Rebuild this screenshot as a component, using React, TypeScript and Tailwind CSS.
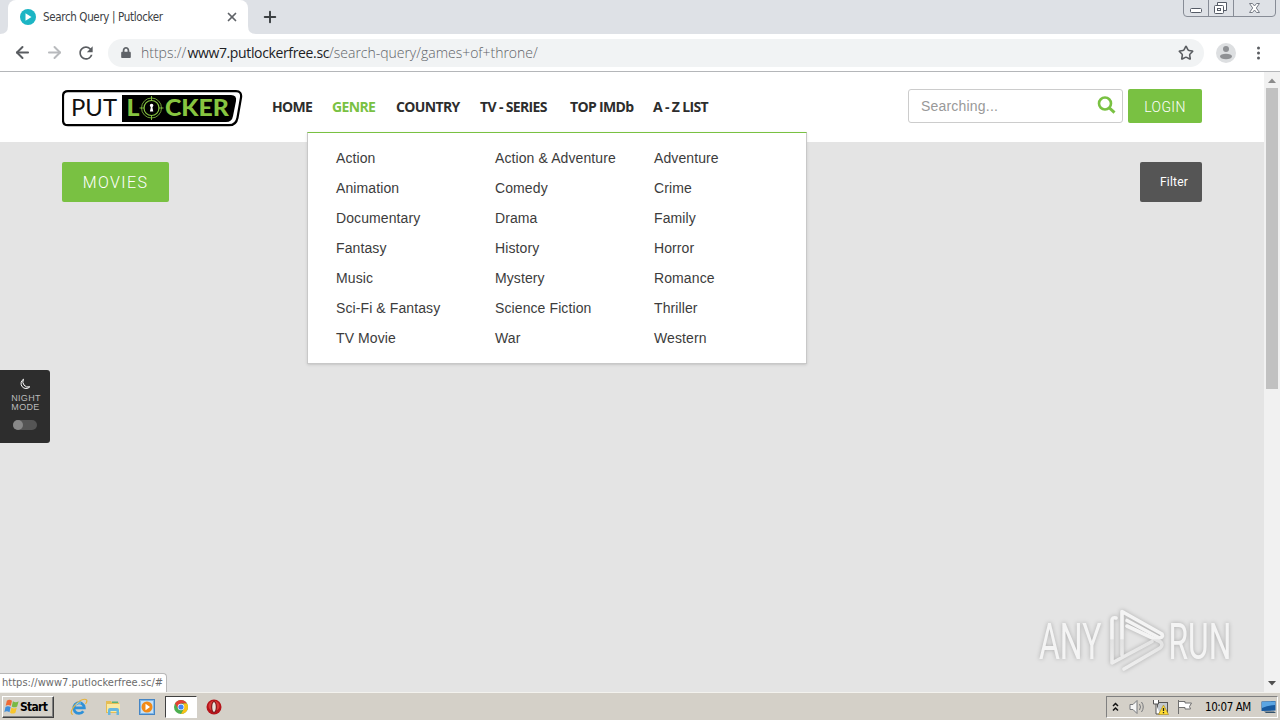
import { ArrowLeft, ArrowRight, Plus, Star, X } from 'lucide-react';
import { FaLock } from 'react-icons/fa';
import { MdRefresh } from 'react-icons/md';

const navItems = [
  { label: 'HOME', className: 'w-[60px]' },
  { label: 'GENRE', className: 'w-16 text-[#79c142]' },
  { label: 'COUNTRY', className: 'w-[84px]' },
  { label: 'TV - SERIES', className: 'w-[90px]' },
  { label: 'TOP IMDb', className: 'w-[83px]' },
  { label: 'A - Z LIST', className: 'w-[60px]' },
];

const genres = [
  'Action', 'Action & Adventure', 'Adventure',
  'Animation', 'Comedy', 'Crime',
  'Documentary', 'Drama', 'Family',
  'Fantasy', 'History', 'Horror',
  'Music', 'Mystery', 'Romance',
  'Sci-Fi & Fantasy', 'Science Fiction', 'Thriller',
  'TV Movie', 'War', 'Western',
];

function WindowControls() {
  return (
    <svg width="94" height="17" viewBox="0 0 94 17" fill="none" className="ml-auto mr-[3px]" aria-hidden>
      <path d="M.5 0v13q0 3.500 3.500 3.500h85q3.500 0 3.500-3.500V0M25.500 0v16M50.500 0v16" stroke="#878c96" />
      <rect x="7.500" y="8.500" width="11" height="4" rx="1" fill="#fff" stroke="#555b66" />
      <path d="M34.500 5V2.500h9v8H41" fill="#fff" stroke="#555b66" />
      <rect x="31.500" y="5.500" width="9" height="8" rx="1" fill="#fff" stroke="#555b66" />
      <rect x="34.500" y="8.500" width="3" height="2" stroke="#555b66" />
      <path d="M66.500 3.500h3l2 2.500 2-2.500h3l-3.200 4.500 3.200 4.500h-3l-2-2.500-2 2.500h-3l3.200-4.500z" fill="#fff" stroke="#777c86" />
    </svg>
  );
}

function TabStrip() {
  return (
    <div className="flex h-[34px] bg-[#dee1e6] pl-2">
      <div className="relative flex h-full w-60 items-center rounded-t-lg bg-white pl-3">
        <svg className="absolute -left-2 bottom-0" width="8" height="8" aria-hidden>
          <path d="M8 0v8H0q8 0 8-8" fill="#fff" />
        </svg>
        <svg className="absolute -right-2 bottom-0" width="8" height="8" aria-hidden>
          <path d="M0 0v8h8q-8 0-8-8" fill="#fff" />
        </svg>
        <svg width="16" height="16" viewBox="0 0 16 16" aria-hidden>
          <circle cx="8" cy="8" r="8" fill="#1cb5c4" />
          <path d="M5.500 4.200l6 3.800-6 3.800z" fill="#fff" />
        </svg>
        <span className="ml-[7px] flex-1 whitespace-nowrap pt-px font-['DejaVu_Sans_Condensed','DejaVu_Sans',sans-serif] text-[11.500px] tracking-[-0.35px] text-[#3c4043]">
          Search Query | Putlocker
        </span>
        <X className="mr-[9px] h-[14px] w-[14px] text-[#5f6368]" strokeWidth={3} aria-hidden />
      </div>
      <Plus className="ml-[13px] mt-2 h-[18px] w-[18px] text-[#3c4043]" strokeWidth={2.6} aria-hidden />
      <WindowControls />
    </div>
  );
}

function Toolbar() {
  return (
    <div className="flex h-[38px] items-center border-b border-[#b4b6b9] bg-white pl-[13px]">
      <ArrowLeft className="h-[19px] w-[19px] text-[#5a5d61]" strokeWidth={2.5} aria-hidden />
      <ArrowRight className="ml-[13px] h-[19px] w-[19px] text-[#b8babd]" strokeWidth={2.5} aria-hidden />
      <MdRefresh className="ml-3 h-5 w-5 text-[#5a5d61]" aria-hidden />
      <div className="ml-[12px] flex h-7 w-[1096px] items-center rounded-full bg-[#f1f3f4] pl-[13px] pr-[10px]">
        <FaLock className="h-[11px] w-[10px] text-[#5f6368]" aria-hidden />
        <span className="ml-[10px] flex-1 whitespace-nowrap pb-px font-['Open_Sans',sans-serif] text-[14px] font-light tracking-[-0.02px] text-[#5f6368]">
          https:/<span className="tracking-[1.200px]">/</span>
          <span className="font-normal tracking-[-0.36px] text-[#202124]">www7.putlockerfree.sc</span>/search-query/games+of+throne/
        </span>
        <Star className="h-4 w-4 text-[#5a5d61]" strokeWidth={2.4} strokeLinejoin="miter" aria-hidden />
      </div>
      <svg className="ml-3" width="20" height="20" viewBox="0 0 20 20" aria-hidden>
        <circle cx="10" cy="10" r="10" fill="#dddfe1" />
        <circle cx="10" cy="6" r="3" fill="#8f9194" />
        <ellipse cx="10" cy="13.500" rx="6" ry="2.700" fill="#8f9194" />
      </svg>
      <svg className="ml-5" width="4" height="14" aria-hidden>
        <g fill="#5a5d61">
          <circle cx="2.500" cy="2" r="1.500" />
          <circle cx="2.500" cy="7" r="1.500" />
          <circle cx="2.500" cy="12" r="1.500" />
        </g>
      </svg>
    </div>
  );
}

function Logo() {
  return (
    <svg width="181" height="37" viewBox="0 0 181 37" className="shrink-0" aria-label="Putlocker">
      <path d="M6 1.200h168q6 0 5 6.500l-3.500 20q-1.300 7.500-8.500 7.500H6q-5 0-5-5V6.200q0-5 5-5z" fill="#fff" stroke="#000" strokeWidth="2.200" />
      <path d="M60 5h109q6 0 5 6l-3 15q-1 6-7 6H60z" fill="#000" />
      <text x="9" y="26" textLength="46" lengthAdjust="spacingAndGlyphs" fontFamily="Lato" fontSize="22.500" fill="#111">PUT</text>
      <g fontFamily="Lato" fontWeight="900" fontSize="22" fill="#87c540">
        <text x="64.500" y="26" textLength="13" lengthAdjust="spacingAndGlyphs">L</text>
        <text x="103" y="26" textLength="64" lengthAdjust="spacingAndGlyphs">CKER</text>
      </g>
      <g fill="none" stroke="#87c540">
        <circle cx="89.500" cy="18" r="10" strokeWidth=".8" />
        <circle cx="89.500" cy="18" r="7.500" strokeWidth="1.200" />
        <path d="M89.500 6v5M89.500 25v5M77.500 18h5M96.500 18h5" strokeWidth=".9" />
      </g>
      <path d="M87.800 15.500a1.800 1.800 0 1 1 3.600 0l-1 2 .9 4h-3.400l.9-4z" fill="#fff" />
    </svg>
  );
}

function GenreMenu() {
  return (
    <div className="absolute left-[307px] top-[60px] grid h-[232px] w-[500px] grid-cols-[159px_159px_1fr] auto-rows-[30px] border border-t-[#79c142] border-[#c8c8c8] bg-white pl-7 pt-[10px] font-['Liberation_Sans',sans-serif] text-[14px] leading-[30px] tracking-[0.1px] text-[#3c3c3c] shadow-sm">
      {genres.map((genre) => (
        <a key={genre} className="whitespace-nowrap">{genre}</a>
      ))}
    </div>
  );
}

function SiteHeader() {
  return (
    <header className="flex h-[70px] items-start bg-white pl-[62px] pr-[62px]">
      <div className="mt-[18px]"><Logo /></div>
      <nav className="ml-[29px] mt-[23px] flex font-['Open_Sans',sans-serif] text-[14px] font-bold leading-6 tracking-[-0.65px] text-[#2d2d2d]">
        {navItems.map((item) => (
          <a key={item.label} className={`whitespace-nowrap ${item.className}`}>{item.label}</a>
        ))}
      </nav>
      <div className="ml-auto mt-[17px] flex h-[34px] w-[215px] items-center rounded-[3px] border border-[#ccc] bg-white pl-3 pr-[6px]">
        <span className="flex-1 font-['Liberation_Sans',sans-serif] text-[14px] tracking-[0.2px] text-[#999]">Searching...</span>
        <svg className="mb-[3px]" width="19" height="18" viewBox="0 0 19 18" fill="none" stroke="#79c142" aria-hidden>
          <circle cx="8" cy="7.500" r="6" strokeWidth="2.600" />
          <path d="M12.500 12l5 4.700" strokeWidth="3" />
        </svg>
      </div>
      <button className="ml-[5px] mt-[17px] h-[34px] w-[74px] rounded-[2px] bg-[#79c142] pt-[2px] font-[Roboto,sans-serif] text-[14px] font-light tracking-[0.4px] text-white">
        LOGIN
      </button>
    </header>
  );
}

function NightMode() {
  return (
    <div className="absolute left-0 top-[298px] flex h-[73px] w-[50px] flex-col items-center rounded-r-[3px] bg-[#2d2d2d] pt-2 font-['Liberation_Sans',sans-serif] text-[9px] leading-[9px] tracking-[0.35px] text-[#bbb]">
      <svg width="12" height="12" viewBox="0 0 12 12" fill="none" stroke="#fff" aria-hidden>
        <path d="M4.500 1.200A5 5 0 1 0 10.800 8.800 5.300 5.300 0 0 1 4.500 1.200z" strokeWidth="1" />
      </svg>
      <span className="ml-[2px] mt-1">NIGHT</span>
      <span className="ml-px">MODE</span>
      <span className="mt-2 flex h-[10px] w-6 rounded-full bg-[#555]">
        <span className="h-[10px] w-[10px] rounded-full bg-[#888]" />
      </span>
    </div>
  );
}

function Watermark() {
  return (
    <svg className="absolute bottom-[14px] left-[1030px] drop-shadow-[0_0_2px_rgba(0,0,0,0.25)]" width="230" height="76" viewBox="0 0 230 76" aria-hidden>
      <defs>
        <linearGradient id="mark" x1="0" y1="0" x2="0" y2="76" gradientUnits="userSpaceOnUse">
          <stop offset="0.480" stopColor="#f4f4f4" />
          <stop offset="0.500" stopColor="#e3e3e3" />
          <stop offset="0.800" stopColor="#ededed" />
        </linearGradient>
      </defs>
      <g fill="url(#mark)" fontFamily="Roboto" fontSize="50">
        <text transform="translate(9 57) scale(.64 1)">ANY</text>
        <text transform="translate(138.500 57) scale(.635 1)">RUN</text>
      </g>
      <g fill="none" stroke="url(#mark)" strokeWidth="3.600" strokeLinecap="round" strokeLinejoin="round">
        <path d="M92 53V9.500l40 22.500q1.500 3-2.500 4L97 18.500" />
        <path d="M86 16q-4-1-4 2v43l40-21.500" />
        <path d="M94 67l36-21q4-3.500 0-6.500L97 24" />
      </g>
    </svg>
  );
}

function Scrollbar() {
  return (
    <div className="flex w-4 flex-col items-center bg-[#f1f1f1]">
      <svg width="16" height="16" aria-hidden><path d="M4 11l4-4.500 4 4.500z" fill="#8b8b8b" /></svg>
      <div className="h-[301px] w-3 bg-[#c1c1c1]" />
      <svg className="mt-auto" width="16" height="16" aria-hidden><path d="M4 5l4 4.500L12 5z" fill="#505050" /></svg>
    </div>
  );
}

function StartButton() {
  return (
    <div className="ml-[2px] flex h-[22px] w-[52px] items-center border border-b-[#404040] border-l-white border-r-[#404040] border-t-white bg-[#d4d0c8] pl-px font-['DejaVu_Sans_Condensed','DejaVu_Sans',sans-serif] text-[12px] font-bold tracking-[-0.7px] text-black shadow-[inset_-1px_-1px_#808080]">
      <svg width="16" height="16" viewBox="1 1 14 14" className="shrink-0" aria-hidden>
        <path d="M3.500 2.500q2-1.500 4.500 0L7 7q-2.500-1.500-4.500 0z" fill="#ef6a35" />
        <path d="M8.800 3q2.500 1.500 5 0L12.500 7.500q-2.500 1.500-4.700 0z" fill="#79b943" />
        <path d="M2.300 8q2-1.500 4.500 0l-1 4.500q-2.500-1.500-4.500 0z" fill="#3f8edb" />
        <path d="M7.500 8.500q2.500 1.500 4.700 0L11 13q-2.500 1.500-4.700 0z" fill="#f8c52c" />
      </svg>
      Start
    </div>
  );
}

function Taskbar() {
  return (
    <footer className="flex h-7 items-center border-t border-[#f3f2ee] bg-[#d4d0c8] pt-px">
      <StartButton />
      <svg className="ml-[16px]" width="18" height="18" viewBox="0 0 18 18" fill="none" aria-hidden>
        <path d="M4.500 9.800h9.800A5.300 5.300 0 1 0 13.300 13.200" stroke="#2f91d8" strokeWidth="2.800" />
        <path d="M3 16.500Q-1 15.500 4 8.500 11 0 16 1.500q2 1-.5 4.500" stroke="#e6b33b" strokeWidth="1.200" />
        <path d="M5.500 7Q8 4 11 5" stroke="#8fd3f7" />
      </svg>
      <svg className="ml-[17px]" width="16" height="17" viewBox="0 0 16 17" aria-hidden>
        <path d="M1 2h5l1 1.500h7V14H1z" fill="#e5bd55" />
        <path d="M2 5h13v8H2z" fill="#f9e9a2" />
        <path d="M3 16v-5q0-2 2-2h7q2 0 2 2v5h-2.500v-4h-6v4z" fill="#66b7df" />
        <path d="M7 2.500h6v1.500H7z" fill="#5bb374" />
      </svg>
      <svg className="ml-[18px]" width="16" height="16" viewBox="0 0 16 16" aria-hidden>
        <rect x=".5" y=".5" width="15" height="15" fill="#7db6e8" stroke="#4585c4" />
        <rect x="2" y="2" width="12" height="12" fill="#c7e1f6" />
        <circle cx="8" cy="8" r="5.500" fill="#f28a16" />
        <path d="M6.500 4.700l4.500 3.300-4.500 3.300z" fill="#fff" />
      </svg>
      <div className="ml-[10px] flex h-[22px] w-8 items-center justify-center border border-b-white border-l-[#404040] border-r-white border-t-[#404040] bg-white">
        <svg width="14" height="14" viewBox="0 0 14 14" aria-hidden>
          <circle cx="7" cy="7" r="7" fill="#4caf50" />
          <path d="M1 3.500A7 7 0 0 1 13 3.500H7L4 8.500z" fill="#e34133" />
          <path d="M13 3.500A7 7 0 0 1 7 14L10 8.500 9.500 3.500z" fill="#fbc116" />
          <circle cx="7" cy="7" r="3.300" fill="#fff" />
          <circle cx="7" cy="7" r="2.600" fill="#4285f4" />
        </svg>
      </div>
      <svg className="ml-[9px]" width="16" height="16" viewBox="0 0 16 16" aria-hidden>
        <circle cx="8" cy="8" r="7.500" fill="#b5141a" />
        <ellipse cx="8" cy="7" rx="5.500" ry="5" fill="#d83a3a" />
        <ellipse cx="8" cy="8" rx="2.300" ry="5.500" fill="#e8e2dc" stroke="#6d080c" />
      </svg>
      <Tray />
    </footer>
  );
}

function Tray() {
  return (
    <div className="ml-auto mr-[2px] flex h-[22px] w-[172px] items-center border border-b-white border-l-[#808080] border-r-white border-t-[#808080] pl-[5px] font-['DejaVu_Sans_Condensed','DejaVu_Sans',sans-serif] text-[11.500px] tracking-[-0.4px] text-black">
      <svg width="7" height="10" fill="none" stroke="#111" strokeWidth="1.500" aria-hidden>
        <path d="M1 4l2.500-2.500L6 4M1 8.500L3.500 6 6 8.500" />
      </svg>
      <svg className="ml-[10px]" width="17" height="16" viewBox="0 0 17 16" fill="none" stroke="#77797c" aria-hidden>
        <path d="M1 5.500h3L8 1.500v13l-4-4H1z" fill="#f6f6f6" />
        <path d="M10.500 5q2 3 0 6M12.500 3q3.500 5 0 10" />
      </svg>
      <svg className="ml-[6px]" width="18" height="17" viewBox="0 0 18 17" aria-hidden>
        <rect x="5.500" y="3.500" width="10" height="10" fill="#c3c9ce" stroke="#555" />
        <path d="M1.500 1v4h5V1M4 5v10h4" fill="#fff" stroke="#555" />
        <path d="M11.500 6L16.500 15.500H6.500z" fill="#ffdc32" stroke="#a58518" strokeWidth=".6" />
        <path d="M11.500 9v3M11.500 13v1.200" stroke="#222" strokeWidth="1.300" />
      </svg>
      <svg className="ml-[7px]" width="16" height="16" viewBox="0 0 16 16" aria-hidden>
        <path d="M1.500 1v14M2 2.500h6v1.500h6.500l-2 3.500 1 2.500H8V8.500H2" fill="#fff" stroke="#707070" />
      </svg>
      <span className="ml-[12px] whitespace-nowrap pt-px">10:07 AM</span>
      <svg className="ml-auto mr-px" width="15" height="14" viewBox="0 0 15 14" aria-hidden>
        <path d="M.5 1.500L14.500 1v9.500L.5 11z" fill="#17599f" />
        <path d="M1 2l13-.5V5Q7 5 1 8z" fill="#5ba5e3" />
        <path d="M3 11.500h10l2 1.500H5z" fill="#32516b" />
      </svg>
    </div>
  );
}

export default function App() {
  return (
    <div className="flex h-[720px] w-[1280px] flex-col overflow-hidden">
      <TabStrip />
      <Toolbar />
      <div className="relative flex flex-1">
        <div className="flex-1 bg-[#e4e4e4]">
          <SiteHeader />
          <main className="flex justify-between px-[62px] pt-5">
            <h1 className="flex h-10 w-[107px] items-center justify-center rounded-[2px] bg-[#79c142] pt-px font-[Roboto,sans-serif] text-[16px] font-light tracking-[1.400px] text-white">
              MOVIES
            </h1>
            <button className="h-10 w-[62px] rounded-[2px] bg-[#555] pl-[6px] font-[Roboto,sans-serif] text-[12px] tracking-[0.2px] text-white">
              Filter
            </button>
          </main>
        </div>
        <Scrollbar />
        <GenreMenu />
        <NightMode />
        <Watermark />
        <div className="absolute bottom-0 left-0 flex h-[19px] w-[167px] items-center whitespace-nowrap rounded-tr-[4px] border border-b-0 border-l-0 border-[#b8b8b8] bg-white pl-[2px] pt-px font-['DejaVu_Sans_Condensed','DejaVu_Sans',sans-serif] text-[11px] tracking-[0.03px] text-[#6b6b6b]">
          https://www7.putlockerfree.sc/#
        </div>
      </div>
      <Taskbar />
    </div>
  );
}
